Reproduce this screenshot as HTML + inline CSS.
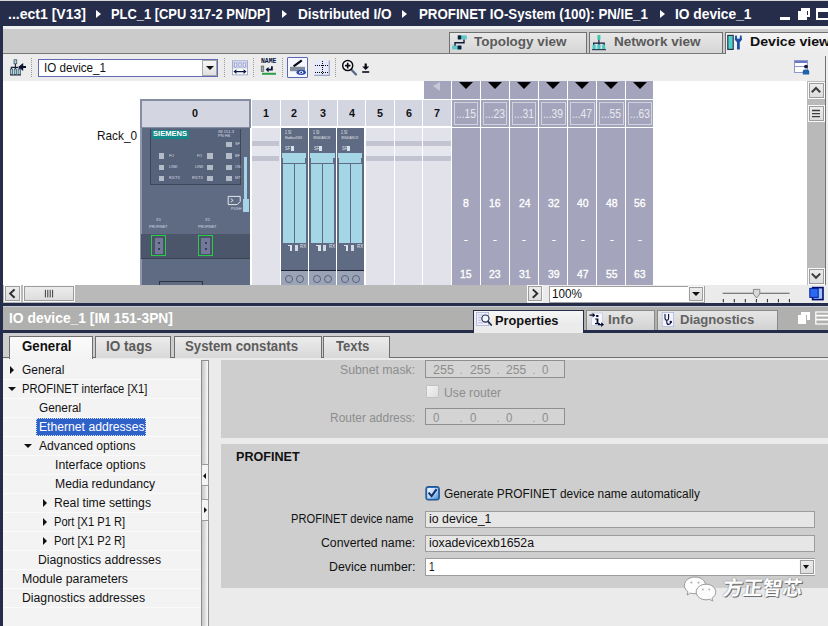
<!DOCTYPE html>
<html lang="en">
<head>
<meta charset="utf-8">
<title>IO device_1 - Device view</title>
<style>
*{box-sizing:border-box;margin:0;padding:0}
html,body{width:828px;height:626px;overflow:hidden;background:#ebebeb}
body{position:relative;font-family:"Liberation Sans","Noto Sans CJK SC",sans-serif;font-size:12px;color:#111}
.a{position:absolute}
.t{position:absolute;white-space:nowrap;line-height:1;transform-origin:0 50%}
svg{position:absolute;overflow:visible}
i.ar{position:absolute;top:10px;width:0;height:0;border-left:5.4px solid #fff;border-top:4.8px solid transparent;border-bottom:4.8px solid transparent}
.vtab{position:absolute;top:32px;height:21px;border:1px solid #707070;border-bottom:none;background:linear-gradient(#e8e8e8,#d5d5d5)}
.sep{position:absolute;top:58px;width:0;height:19px;border-left:1px dotted #9a9a9a}
.sbtn{position:absolute;background:linear-gradient(#f6f6f6,#e0e0e0);border:1px solid #a8a8a8}
.inp{position:absolute;border:1px solid #9c9c9c;background:#e6e6e6}
</style>
</head>
<body>
<!-- TITLE BAR -->
<div class="a" style="left:0px;top:0px;width:828px;height:25.6px;background:#262d4a;"></div>
<div class="a" style="left:0px;top:0px;width:828px;height:1px;background:#d8d8d8;"></div>
<span class="t" style="left:8px;top:7.6px;font-size:13.8px;font-weight:bold;color:#fff;transform:scaleX(1.017);">...ect1 [V13]</span>
<i class="ar" style="left:96px"></i>
<span class="t" style="left:111px;top:7.6px;font-size:13.8px;font-weight:bold;color:#fff;transform:scaleX(0.934);">PLC_1 [CPU 317-2 PN/DP]</span>
<i class="ar" style="left:282px"></i>
<span class="t" style="left:297.5px;top:7.6px;font-size:13.8px;font-weight:bold;color:#fff;transform:scaleX(0.984);">Distributed I/O</span>
<i class="ar" style="left:402px"></i>
<span class="t" style="left:419px;top:7.6px;font-size:13.8px;font-weight:bold;color:#fff;transform:scaleX(0.963);">PROFINET IO-System (100): PN/IE_1</span>
<i class="ar" style="left:660px"></i>
<span class="t" style="left:675px;top:7.6px;font-size:13.8px;font-weight:bold;color:#fff;transform:scaleX(0.997);">IO device_1</span>
<div class="a" style="left:780px;top:17px;width:10px;height:3px;background:#fff;"></div>
<div class="a" style="left:801px;top:8px;width:9px;height:9px;border:2px solid #fff;border-top-width:3px"></div>
<div class="a" style="left:798px;top:11px;width:9px;height:9px;background:#fff;"></div>
<div class="a" style="left:816px;top:8px;width:14px;height:12px;border:2px solid #fff;border-top-width:4px"></div>
<div class="a" style="left:0px;top:26px;width:3px;height:280px;background:#262d4a;"></div>
<!-- VIEW TABS -->
<div class="a" style="left:3px;top:25.6px;width:825px;height:3.4px;background:#f0f0f0;"></div>
<div class="a" style="left:3px;top:29px;width:825px;height:24px;background:#cbcbcb;"></div>
<div class="a" style="left:3px;top:53px;width:825px;height:1px;background:#777;"></div>
<div class="vtab" style="left:449px;width:138px"></div>
<div class="vtab" style="left:589px;width:134px"></div>
<div class="vtab" style="left:724.6px;width:110px;height:22px;background:linear-gradient(#f4f4f4,#ececec)"></div>
<span class="t" style="left:474px;top:35.2px;font-size:13.6px;font-weight:bold;color:#5a5a5a;transform:scaleX(0.990);">Topology view</span>
<span class="t" style="left:614px;top:35.2px;font-size:13.6px;font-weight:bold;color:#5a5a5a;transform:scaleX(0.996);">Network view</span>
<span class="t" style="left:750px;top:35.2px;font-size:13.6px;font-weight:bold;color:#111;transform:scaleX(1.038);">Device view</span>
<!-- TOOLBAR -->
<div class="a" style="left:3px;top:54px;width:825px;height:27px;background:#ececec;"></div>
<div class="sep" style="left:31px"></div>
<div class="a" style="left:38px;top:59px;width:180px;height:18px;border:1px solid #5f69b4;background:#fff"></div>
<span class="t" style="left:43.5px;top:62.25px;font-size:12.5px;color:#111;transform:scaleX(0.929);">IO device_1</span>
<div class="sbtn" style="left:202px;top:60px;width:15px;height:16px"></div>
<div class="a" style="left:206px;top:66px;width:0;height:0;border-top:4px solid #111;border-left:4px solid transparent;border-right:4px solid transparent"></div>
<div class="sep" style="left:224px"></div>
<div class="sep" style="left:253px"></div>
<div class="sep" style="left:282px"></div>
<div class="sep" style="left:335px"></div>
<svg style="left:9px;top:58px" width="18" height="18" viewBox="9 58 18 18">
<rect x="14" y="59.8" width="2.8" height="4" fill="#a8d0d8" stroke="#2a4a5a" stroke-width=".7"/>
<path d="M15.4 64v3.4M10.8 67.4h7.4M11.4 67.4v2M15.4 67.4v2M19.3 67.4v2" stroke="#16203a" stroke-width="1.1" fill="none"/>
<rect x="10.3" y="69" width="2.3" height="5.4" fill="#a8d0d8" stroke="#2a4a5a" stroke-width=".7"/>
<rect x="14.2" y="69" width="2.3" height="5.4" fill="#a8d0d8" stroke="#2a4a5a" stroke-width=".7"/>
<rect x="18.1" y="69" width="2.3" height="5.4" fill="#a8d0d8" stroke="#2a4a5a" stroke-width=".7"/>
<path d="M10 75h11" stroke="#16203a" stroke-width="1"/>
<path d="M18.2 67l5-4v3h2.8v2h-2.8v3z" fill="#0a1030"/>
</svg>
<svg style="left:232px;top:60px" width="16" height="16" viewBox="232 60 16 16">
<rect x="232.5" y="60.8" width="15" height="14" fill="#fff" stroke="#a4acd4" stroke-width="1"/>
<rect x="233" y="61.3" width="14" height="7.2" fill="#cdd2ec"/>
<rect x="234.6" y="63" width="2.2" height="4" fill="#e8ecfa" stroke="#8a94c0" stroke-width=".6"/>
<rect x="238.9" y="63" width="2.2" height="4" fill="#e8ecfa" stroke="#8a94c0" stroke-width=".6"/>
<rect x="243.2" y="63" width="2.2" height="4" fill="#e8ecfa" stroke="#8a94c0" stroke-width=".6"/>
<path d="M233.4 71.6l3-2.4v1.7h7.2v-1.7l3 2.4l-3 2.4v-1.7h-7.2v1.7z" fill="#10183c"/>
</svg>
<span class="t" style="left:261.2px;top:59.35px;font-size:6.5px;font-weight:bold;color:#0c1440;transform:scaleX(0.993);font-family:'Liberation Mono',monospace;">NAME</span>
<svg style="left:260px;top:65px" width="18" height="11" viewBox="260 65 18 11">
<rect x="261.2" y="66" width="2.6" height="5.6" fill="#9aa8a0" stroke="#4a5a58" stroke-width=".6"/>
<path d="M265.6 69.6l3-2.6v1.8h2.4v-2.6h1.8v4.4h-4.2v1.8z" fill="#0c1440"/>
<rect x="262" y="72.8" width="14" height="2" fill="#2ea04a"/>
</svg>
<div class="a" style="left:287px;top:57px;width:21px;height:21px;border:1.5px solid #5c66b6;background:#f6f8ff;border-radius:1px"></div>
<svg style="left:288px;top:58px" width="20" height="20" viewBox="288 58 20 20">
<path d="M293.6 66.4L301.8 60.4" stroke="#0a0a14" stroke-width="2.2"/>
<rect x="290" y="66.8" width="15" height="4.4" fill="#848c98"/>
<ellipse cx="301.2" cy="72.3" rx="4.7" ry="2.6" fill="#2848b4"/>
<ellipse cx="301.2" cy="72.3" rx="2" ry="1.5" fill="#fff"/>
<circle cx="301.2" cy="72.3" r=".9" fill="#16204a"/>
</svg>
<svg style="left:314px;top:60px" width="16" height="16" viewBox="314 60 16 16">
<rect x="314.3" y="60.4" width="15" height="15" fill="#e6e9f9"/>
<path d="M329.3 60.4v15h-15" stroke="#9aa2c4" stroke-width="1.2" fill="none"/>
<path d="M315 65.5h14M315 72.5h14M322.5 61v14" stroke="#0a0a14" stroke-width="1" stroke-dasharray="1 1" fill="none" shape-rendering="crispEdges"/>
</svg>
<svg style="left:340px;top:58px" width="32" height="20" viewBox="340 58 32 20">
<path d="M351.2 69.5L356 74.5" stroke="#5a6a8a" stroke-width="2.4" stroke-linecap="round"/>
<circle cx="347.7" cy="65.6" r="5" fill="#fff" stroke="#0a0a14" stroke-width="1.5"/>
<path d="M344.9 65.6h5.6M347.7 62.8v5.6" stroke="#0a0a14" stroke-width="1.7"/>
<path d="M364.6 63.6h2.2v2.8h2.4l-3.5 3.6l-3.5-3.6h2.4z" fill="#0a0a14"/>
<rect x="362.2" y="71.2" width="7" height="1.6" fill="#0a0a14"/>
</svg>
<svg style="left:794px;top:59px" width="17" height="17" viewBox="794 59 17 17">
<rect x="794.5" y="60.5" width="13" height="12" fill="#fff" stroke="#8e98cc" stroke-width="1"/>
<rect x="795" y="61" width="12" height="2" fill="#6a78c8"/>
<path d="M795 66.5h12" stroke="#8e98cc" stroke-width="1"/>
<circle cx="806" cy="66.6" r="1.9" fill="#10183c"/>
<path d="M802.8 74.6v-3.2q0-2 2-2h2.4q2 0 2 2v3.2z" fill="#1f62a8"/>
</svg>
<svg style="left:450px;top:33px" width="20" height="19" viewBox="450 33 20 19">
<rect x="457.8" y="35.4" width="9" height="4" fill="#5cc8c8"/><rect x="457.8" y="35.4" width="3.4" height="4" fill="#101c3c"/>
<rect x="452" y="45.6" width="9.4" height="3.8" fill="#5cc8c8"/><rect x="457.6" y="45.6" width="3.8" height="3.8" fill="#101c3c"/>
<path d="M464 39.4v3.4h-9v3" fill="none" stroke="#101c3c" stroke-width="1.4"/>
</svg>
<svg style="left:590px;top:33px" width="20" height="19" viewBox="590 33 20 19">
<rect x="597.4" y="35" width="3" height="4.8" fill="#3ec8b0"/>
<path d="M598.9 39.8v3.4M593.6 45v-1.8h10.6v1.8M598.9 43.2v1.8" fill="none" stroke="#101c3c" stroke-width="1.2"/>
<rect x="592.6" y="44.6" width="3" height="4.6" fill="#3ec8c0"/><rect x="597.4" y="44.6" width="3" height="4.6" fill="#3ec8c0"/><rect x="602.2" y="44.6" width="3" height="4.6" fill="#3ec8c0"/>
<path d="M592 49.7h14" stroke="#101c3c" stroke-width="1"/>
</svg>
<svg style="left:726px;top:33px" width="20" height="19" viewBox="726 33 20 19">
<rect x="727.8" y="35.4" width="5.4" height="14" fill="#4ed0d0" stroke="#2a3446" stroke-width="1.2"/>
<path d="M735.2 35.4l1.6 0l.4 3.4l2.4 0l.4-3.4l1.6 0l.4 4.4l-2.2 2.4v7.4h-2.8v-7.4l-2.2-2.4z" fill="#1f4fa4"/>
</svg>
<!-- CANVAS / RACK -->
<div class="a" style="left:3px;top:81px;width:804px;height:204px;background:#fff;"></div>
<span class="t" style="left:97px;top:129.9px;font-size:12.2px;color:#111;transform:scaleX(0.968);">Rack_0</span>
<div class="a" style="left:140.2px;top:99.3px;width:110.6px;height:28.3px;background:#848da2;"></div>
<div class="a" style="left:141.8px;top:100.9px;width:107.4px;height:25.9px;background:#d3d5e1;"></div>
<span class="t" style="left:192.3px;top:107.6px;font-size:11.2px;font-weight:bold;color:#111;transform:scaleX(0.962);">0</span>
<div class="a" style="left:252px;top:100.3px;width:27.6px;height:26.2px;background:#d3d5e1;"></div>
<span class="t" style="left:262.9px;top:107.6px;font-size:11.2px;font-weight:bold;color:#111;transform:scaleX(0.962);">1</span>
<div class="a" style="left:280.58px;top:100.3px;width:27.6px;height:26.2px;background:#d3d5e1;"></div>
<span class="t" style="left:291.48px;top:107.6px;font-size:11.2px;font-weight:bold;color:#111;transform:scaleX(0.962);">2</span>
<div class="a" style="left:309.16px;top:100.3px;width:27.6px;height:26.2px;background:#d3d5e1;"></div>
<span class="t" style="left:320.06px;top:107.6px;font-size:11.2px;font-weight:bold;color:#111;transform:scaleX(0.962);">3</span>
<div class="a" style="left:337.74px;top:100.3px;width:27.6px;height:26.2px;background:#d3d5e1;"></div>
<span class="t" style="left:348.64px;top:107.6px;font-size:11.2px;font-weight:bold;color:#111;transform:scaleX(0.962);">4</span>
<div class="a" style="left:366.32px;top:100.3px;width:27.6px;height:26.2px;background:#d3d5e1;"></div>
<span class="t" style="left:377.22px;top:107.6px;font-size:11.2px;font-weight:bold;color:#111;transform:scaleX(0.962);">5</span>
<div class="a" style="left:394.9px;top:100.3px;width:27.6px;height:26.2px;background:#d3d5e1;"></div>
<span class="t" style="left:405.8px;top:107.6px;font-size:11.2px;font-weight:bold;color:#111;transform:scaleX(0.962);">6</span>
<div class="a" style="left:423.48px;top:100.3px;width:27.6px;height:26.2px;background:#d3d5e1;"></div>
<span class="t" style="left:434.38px;top:107.6px;font-size:11.2px;font-weight:bold;color:#111;transform:scaleX(0.962);">7</span>
<div class="a" style="left:252px;top:127.8px;width:27.6px;height:157.2px;background:#e1e2ea;"></div>
<div class="a" style="left:252px;top:141px;width:27.4px;height:4.8px;background:#c3c4d2;"></div>
<div class="a" style="left:252px;top:145.8px;width:27.4px;height:10px;background:#e6e7ee;"></div>
<div class="a" style="left:252px;top:155.8px;width:27.4px;height:5px;background:#c3c4d2;"></div>
<div class="a" style="left:366.32px;top:127.8px;width:27.6px;height:157.2px;background:#e1e2ea;"></div>
<div class="a" style="left:366.32px;top:141px;width:27.4px;height:4.8px;background:#c3c4d2;"></div>
<div class="a" style="left:366.32px;top:145.8px;width:27.4px;height:10px;background:#e6e7ee;"></div>
<div class="a" style="left:366.32px;top:155.8px;width:27.4px;height:5px;background:#c3c4d2;"></div>
<div class="a" style="left:394.9px;top:127.8px;width:27.6px;height:157.2px;background:#e1e2ea;"></div>
<div class="a" style="left:394.9px;top:141px;width:27.4px;height:4.8px;background:#c3c4d2;"></div>
<div class="a" style="left:394.9px;top:145.8px;width:27.4px;height:10px;background:#e6e7ee;"></div>
<div class="a" style="left:394.9px;top:155.8px;width:27.4px;height:5px;background:#c3c4d2;"></div>
<div class="a" style="left:423.48px;top:127.8px;width:27.6px;height:157.2px;background:#e1e2ea;"></div>
<div class="a" style="left:423.48px;top:141px;width:27.4px;height:4.8px;background:#c3c4d2;"></div>
<div class="a" style="left:423.48px;top:145.8px;width:27.4px;height:10px;background:#e6e7ee;"></div>
<div class="a" style="left:423.48px;top:155.8px;width:27.4px;height:5px;background:#c3c4d2;"></div>
<div class="a" style="left:423.5px;top:80.7px;width:27.2px;height:18px;background:#a4a5bc;"></div>
<div class="a" style="left:432.6px;top:82px;width:0;height:0;border-right:7.4px solid #c6c8d8;border-top:4.6px solid transparent;border-bottom:5.8px solid transparent"></div>
<div class="a" style="left:452px;top:80.7px;width:27.8px;height:18px;background:#a4a5bc;"></div>
<div class="a" style="left:458.6px;top:82px;width:0;height:0;border-top:7.2px solid #000;border-left:7.3px solid transparent;border-right:7.3px solid transparent"></div>
<div class="a" style="left:452px;top:100.3px;width:27.8px;height:26.4px;background:#a4a5bc;"></div>
<div class="a" style="left:453.5px;top:102px;width:24.8px;height:23.2px;border:1px solid #d0d2de"></div>
<span class="t" style="left:456px;top:107.5px;font-size:12px;color:#e8e9f0;transform:scaleX(0.856);">...15</span>
<div class="a" style="left:452px;top:127.8px;width:27.8px;height:157.2px;background:#a4a5bc;"></div>
<span class="t" style="left:463.3px;top:197.4px;font-size:11.6px;color:#fff;transform:scaleX(0.899);-webkit-text-stroke:.35px #fff;">8</span>
<span class="t" style="left:464.3px;top:233.1px;font-size:11.6px;color:#fff;transform:scaleX(0.981);-webkit-text-stroke:.35px #fff;">-</span>
<span class="t" style="left:460.4px;top:268.3px;font-size:11.6px;color:#fff;transform:scaleX(0.899);-webkit-text-stroke:.35px #fff;">15</span>
<div class="a" style="left:481.07px;top:80.7px;width:27.8px;height:18px;background:#a4a5bc;"></div>
<div class="a" style="left:487.67px;top:82px;width:0;height:0;border-top:7.2px solid #000;border-left:7.3px solid transparent;border-right:7.3px solid transparent"></div>
<div class="a" style="left:481.07px;top:100.3px;width:27.8px;height:26.4px;background:#a4a5bc;"></div>
<div class="a" style="left:482.57px;top:102px;width:24.8px;height:23.2px;border:1px solid #d0d2de"></div>
<span class="t" style="left:485.07px;top:107.5px;font-size:12px;color:#e8e9f0;transform:scaleX(0.856);">...23</span>
<div class="a" style="left:481.07px;top:127.8px;width:27.8px;height:157.2px;background:#a4a5bc;"></div>
<span class="t" style="left:489.47px;top:197.4px;font-size:11.6px;color:#fff;transform:scaleX(0.899);-webkit-text-stroke:.35px #fff;">16</span>
<span class="t" style="left:493.37px;top:233.1px;font-size:11.6px;color:#fff;transform:scaleX(0.981);-webkit-text-stroke:.35px #fff;">-</span>
<span class="t" style="left:489.47px;top:268.3px;font-size:11.6px;color:#fff;transform:scaleX(0.899);-webkit-text-stroke:.35px #fff;">23</span>
<div class="a" style="left:510.14px;top:80.7px;width:27.8px;height:18px;background:#a4a5bc;"></div>
<div class="a" style="left:516.74px;top:82px;width:0;height:0;border-top:7.2px solid #000;border-left:7.3px solid transparent;border-right:7.3px solid transparent"></div>
<div class="a" style="left:510.14px;top:100.3px;width:27.8px;height:26.4px;background:#a4a5bc;"></div>
<div class="a" style="left:511.64px;top:102px;width:24.8px;height:23.2px;border:1px solid #d0d2de"></div>
<span class="t" style="left:514.14px;top:107.5px;font-size:12px;color:#e8e9f0;transform:scaleX(0.856);">...31</span>
<div class="a" style="left:510.14px;top:127.8px;width:27.8px;height:157.2px;background:#a4a5bc;"></div>
<span class="t" style="left:518.54px;top:197.4px;font-size:11.6px;color:#fff;transform:scaleX(0.899);-webkit-text-stroke:.35px #fff;">24</span>
<span class="t" style="left:522.44px;top:233.1px;font-size:11.6px;color:#fff;transform:scaleX(0.981);-webkit-text-stroke:.35px #fff;">-</span>
<span class="t" style="left:518.54px;top:268.3px;font-size:11.6px;color:#fff;transform:scaleX(0.899);-webkit-text-stroke:.35px #fff;">31</span>
<div class="a" style="left:539.21px;top:80.7px;width:27.8px;height:18px;background:#a4a5bc;"></div>
<div class="a" style="left:545.81px;top:82px;width:0;height:0;border-top:7.2px solid #000;border-left:7.3px solid transparent;border-right:7.3px solid transparent"></div>
<div class="a" style="left:539.21px;top:100.3px;width:27.8px;height:26.4px;background:#a4a5bc;"></div>
<div class="a" style="left:540.71px;top:102px;width:24.8px;height:23.2px;border:1px solid #d0d2de"></div>
<span class="t" style="left:543.21px;top:107.5px;font-size:12px;color:#e8e9f0;transform:scaleX(0.856);">...39</span>
<div class="a" style="left:539.21px;top:127.8px;width:27.8px;height:157.2px;background:#a4a5bc;"></div>
<span class="t" style="left:547.61px;top:197.4px;font-size:11.6px;color:#fff;transform:scaleX(0.899);-webkit-text-stroke:.35px #fff;">32</span>
<span class="t" style="left:551.51px;top:233.1px;font-size:11.6px;color:#fff;transform:scaleX(0.981);-webkit-text-stroke:.35px #fff;">-</span>
<span class="t" style="left:547.61px;top:268.3px;font-size:11.6px;color:#fff;transform:scaleX(0.899);-webkit-text-stroke:.35px #fff;">39</span>
<div class="a" style="left:568.28px;top:80.7px;width:27.8px;height:18px;background:#a4a5bc;"></div>
<div class="a" style="left:574.88px;top:82px;width:0;height:0;border-top:7.2px solid #000;border-left:7.3px solid transparent;border-right:7.3px solid transparent"></div>
<div class="a" style="left:568.28px;top:100.3px;width:27.8px;height:26.4px;background:#a4a5bc;"></div>
<div class="a" style="left:569.78px;top:102px;width:24.8px;height:23.2px;border:1px solid #d0d2de"></div>
<span class="t" style="left:572.28px;top:107.5px;font-size:12px;color:#e8e9f0;transform:scaleX(0.856);">...47</span>
<div class="a" style="left:568.28px;top:127.8px;width:27.8px;height:157.2px;background:#a4a5bc;"></div>
<span class="t" style="left:576.68px;top:197.4px;font-size:11.6px;color:#fff;transform:scaleX(0.899);-webkit-text-stroke:.35px #fff;">40</span>
<span class="t" style="left:580.58px;top:233.1px;font-size:11.6px;color:#fff;transform:scaleX(0.981);-webkit-text-stroke:.35px #fff;">-</span>
<span class="t" style="left:576.68px;top:268.3px;font-size:11.6px;color:#fff;transform:scaleX(0.899);-webkit-text-stroke:.35px #fff;">47</span>
<div class="a" style="left:597.35px;top:80.7px;width:27.8px;height:18px;background:#a4a5bc;"></div>
<div class="a" style="left:603.95px;top:82px;width:0;height:0;border-top:7.2px solid #000;border-left:7.3px solid transparent;border-right:7.3px solid transparent"></div>
<div class="a" style="left:597.35px;top:100.3px;width:27.8px;height:26.4px;background:#a4a5bc;"></div>
<div class="a" style="left:598.85px;top:102px;width:24.8px;height:23.2px;border:1px solid #d0d2de"></div>
<span class="t" style="left:601.35px;top:107.5px;font-size:12px;color:#e8e9f0;transform:scaleX(0.856);">...55</span>
<div class="a" style="left:597.35px;top:127.8px;width:27.8px;height:157.2px;background:#a4a5bc;"></div>
<span class="t" style="left:605.75px;top:197.4px;font-size:11.6px;color:#fff;transform:scaleX(0.899);-webkit-text-stroke:.35px #fff;">48</span>
<span class="t" style="left:609.65px;top:233.1px;font-size:11.6px;color:#fff;transform:scaleX(0.981);-webkit-text-stroke:.35px #fff;">-</span>
<span class="t" style="left:605.75px;top:268.3px;font-size:11.6px;color:#fff;transform:scaleX(0.899);-webkit-text-stroke:.35px #fff;">55</span>
<div class="a" style="left:626.42px;top:80.7px;width:26.8px;height:18px;background:#a4a5bc;"></div>
<div class="a" style="left:632.52px;top:82px;width:0;height:0;border-top:7.2px solid #000;border-left:7.3px solid transparent;border-right:7.3px solid transparent"></div>
<div class="a" style="left:626.42px;top:100.3px;width:26.8px;height:26.4px;background:#a4a5bc;"></div>
<div class="a" style="left:627.92px;top:102px;width:23.8px;height:23.2px;border:1px solid #d0d2de"></div>
<span class="t" style="left:630.42px;top:107.5px;font-size:12px;color:#e8e9f0;transform:scaleX(0.856);">...63</span>
<div class="a" style="left:626.42px;top:127.8px;width:26.8px;height:157.2px;background:#a4a5bc;"></div>
<span class="t" style="left:634.32px;top:197.4px;font-size:11.6px;color:#fff;transform:scaleX(0.899);-webkit-text-stroke:.35px #fff;">56</span>
<span class="t" style="left:638.22px;top:233.1px;font-size:11.6px;color:#fff;transform:scaleX(0.981);-webkit-text-stroke:.35px #fff;">-</span>
<span class="t" style="left:634.32px;top:268.3px;font-size:11.6px;color:#fff;transform:scaleX(0.899);-webkit-text-stroke:.35px #fff;">63</span>
<div class="a" style="left:141px;top:127.6px;width:108.6px;height:157.4px;background:#5f6b82;"></div>
<div class="a" style="left:140px;top:127.6px;width:1.8px;height:157.4px;background:#8d96aa;"></div>
<div class="a" style="left:150.3px;top:128.5px;width:90.6px;height:56.2px;background:#56627a;border:1px solid #3d475a;border-top:none"></div>
<div class="a" style="left:151.6px;top:129.6px;width:37.6px;height:9.6px;background:#15888a;"></div>
<span class="t" style="left:153.4px;top:131.1px;font-size:6.8px;font-weight:bold;color:#fff;transform:scaleX(1.111);">SIEMENS</span>
<span class="t" style="left:217.7px;top:130px;font-size:4px;color:#d6dbe6;transform:scaleX(1.013);">IM 151-3</span>
<span class="t" style="left:217.7px;top:134.4px;font-size:4px;color:#d6dbe6;transform:scaleX(1.005);">PN HS</span>
<div class="a" style="left:158.5px;top:153px;width:5.6px;height:5.6px;background:#b3bac8;"></div>
<div class="a" style="left:158.5px;top:164.8px;width:5.6px;height:5.6px;background:#b3bac8;"></div>
<div class="a" style="left:158.5px;top:175.8px;width:5.6px;height:5.6px;background:#b3bac8;"></div>
<div class="a" style="left:207.3px;top:153px;width:5.6px;height:5.6px;background:#b3bac8;"></div>
<div class="a" style="left:207.3px;top:164.8px;width:5.6px;height:5.6px;background:#b3bac8;"></div>
<div class="a" style="left:207.3px;top:175.8px;width:5.6px;height:5.6px;background:#b3bac8;"></div>
<div class="a" style="left:226.3px;top:141.6px;width:5.6px;height:5.6px;background:#b3bac8;"></div>
<div class="a" style="left:226.3px;top:153px;width:5.6px;height:5.6px;background:#b3bac8;"></div>
<div class="a" style="left:226.3px;top:164.8px;width:5.6px;height:5.6px;background:#b3bac8;"></div>
<div class="a" style="left:226.3px;top:175.8px;width:5.6px;height:5.6px;background:#b3bac8;"></div>
<span class="t" style="left:169px;top:153.8px;font-size:4.4px;color:#d6dbe6;transform:scaleX(0.818);">FO</span>
<span class="t" style="left:169px;top:165.4px;font-size:4.4px;color:#d6dbe6;transform:scaleX(0.870);">LINK</span>
<span class="t" style="left:169px;top:176.4px;font-size:4.4px;color:#d6dbe6;transform:scaleX(0.850);">RX/TX</span>
<span class="t" style="left:196.5px;top:153.8px;font-size:4.4px;color:#d6dbe6;transform:scaleX(0.818);">FO</span>
<span class="t" style="left:194.5px;top:165.4px;font-size:4.4px;color:#d6dbe6;transform:scaleX(0.870);">LINK</span>
<span class="t" style="left:192px;top:176.4px;font-size:4.4px;color:#d6dbe6;transform:scaleX(0.850);">RX/TX</span>
<span class="t" style="left:234.5px;top:142.2px;font-size:4.4px;color:#d6dbe6;transform:scaleX(0.889);">SF</span>
<span class="t" style="left:234.5px;top:153.8px;font-size:4.4px;color:#d6dbe6;transform:scaleX(0.889);">BF</span>
<span class="t" style="left:234.5px;top:165.4px;font-size:4.4px;color:#d6dbe6;transform:scaleX(0.834);">ON</span>
<span class="t" style="left:234.5px;top:176.4px;font-size:4.4px;color:#d6dbe6;transform:scaleX(0.867);">MT</span>
<div class="a" style="left:244px;top:156.6px;width:2.7px;height:42.4px;background:#a6d3e6;"></div>
<div class="a" style="left:242.6px;top:198.6px;width:6.2px;height:13.2px;background:#a6d3e6;"></div>
<svg style="left:227px;top:195px" width="15" height="11" viewBox="227 195 15 11">
<path d="M228.2 196.4h12v5.2l-3 3h-9z" fill="none" stroke="#e4e8f0" stroke-width="1"/>
<path d="M230.6 198.6l2.6 1.8l-2.6 1.8" fill="none" stroke="#e4e8f0" stroke-width=".9"/>
</svg>
<span class="t" style="left:230.6px;top:206.7px;font-size:4.2px;color:#d6dbe6;transform:scaleX(0.893);">PUSH</span>
<span class="t" style="left:155.6px;top:217.5px;font-size:4.2px;color:#d6dbe6;transform:scaleX(0.976);">X1</span>
<span class="t" style="left:148.8px;top:224.7px;font-size:4.2px;color:#d6dbe6;transform:scaleX(0.879);">PROFINET</span>
<span class="t" style="left:204.6px;top:217.5px;font-size:4.2px;color:#d6dbe6;transform:scaleX(0.976);">X1</span>
<span class="t" style="left:197.8px;top:224.7px;font-size:4.2px;color:#d6dbe6;transform:scaleX(0.879);">PROFINET</span>
<div class="a" style="left:141px;top:234px;width:108.5px;height:24px;background:#4b566b;"></div>
<div class="a" style="left:141px;top:258px;width:108.5px;height:1.2px;background:#39424f;"></div>
<div class="a" style="left:151.1px;top:235px;width:15.4px;height:21.4px;border:1.9px solid #27cc48;background:#4a5366"></div>
<div class="a" style="left:154.5px;top:237.6px;width:8.6px;height:16.6px;background:#74799a;"></div>
<div class="a" style="left:157.8px;top:241.6px;width:2px;height:2.4px;background:#39405a;"></div>
<div class="a" style="left:157.8px;top:247.8px;width:2px;height:2.4px;background:#39405a;"></div>
<div class="a" style="left:198px;top:235px;width:15.4px;height:21.4px;border:1.9px solid #27cc48;background:#4a5366"></div>
<div class="a" style="left:201.4px;top:237.6px;width:8.6px;height:16.6px;background:#74799a;"></div>
<div class="a" style="left:204.7px;top:241.6px;width:2px;height:2.4px;background:#39405a;"></div>
<div class="a" style="left:204.7px;top:247.8px;width:2px;height:2.4px;background:#39405a;"></div>
<div class="a" style="left:158.5px;top:281.4px;width:44.4px;height:5px;border:1px solid #2c3444;border-bottom:none"></div>
<div class="a" style="left:281.1px;top:127.8px;width:26.7px;height:142.2px;background:#5f6b82;"></div>
<span class="t" style="left:284.5px;top:130.5px;font-size:4.6px;color:#e2e6ee;transform:scaleX(0.771);">1 SI</span>
<span class="t" style="left:284.5px;top:137.3px;font-size:3.8px;color:#e2e6ee;transform:scaleX(0.769);">Modbus/USS</span>
<span class="t" style="left:285.3px;top:146.6px;font-size:4.8px;color:#e2e6ee;transform:scaleX(0.831);">SF</span>
<div class="a" style="left:291px;top:146.1px;width:3px;height:5.3px;background:#d3e3f0;"></div>
<div class="a" style="left:282.1px;top:153px;width:24.2px;height:5px;background:#a5d6e6;"></div>
<div class="a" style="left:283px;top:158px;width:22.2px;height:4.9px;background:#a5d6e6;"></div>
<div class="a" style="left:283px;top:163.8px;width:11px;height:79px;background:#a5d6e6;"></div>
<div class="a" style="left:295.1px;top:163.8px;width:11px;height:79px;background:#a5d6e6;"></div>
<div class="a" style="left:287.6px;top:245px;width:4.6px;height:1.3px;background:#dde3ec;"></div>
<div class="a" style="left:289.7px;top:245px;width:2.5px;height:5.5px;background:#dde3ec;"></div>
<div class="a" style="left:294.8px;top:245px;width:3.3px;height:5.5px;background:#d3d9e4;"></div>
<span class="t" style="left:300.3px;top:245.1px;font-size:4.6px;color:#e2e6ee;transform:scaleX(0.970);">RX</span>
<div class="a" style="left:281.1px;top:269.7px;width:26.7px;height:1.4px;background:#1a2030;"></div>
<div class="a" style="left:281.1px;top:271.1px;width:26.7px;height:13.9px;background:#9ba4b7;"></div>
<div class="a" style="left:284.8px;top:274.8px;width:7.8px;height:7.8px;border:1px solid #56617a;border-radius:50%"></div>
<div class="a" style="left:296.1px;top:274.8px;width:7.8px;height:7.8px;border:1px solid #56617a;border-radius:50%"></div>
<div class="a" style="left:309.4px;top:127.8px;width:26.7px;height:142.2px;background:#5f6b82;"></div>
<span class="t" style="left:312.8px;top:130.5px;font-size:4.6px;color:#e2e6ee;transform:scaleX(0.771);">1 SI</span>
<span class="t" style="left:312.8px;top:137.3px;font-size:3.8px;color:#e2e6ee;transform:scaleX(0.886);">3964/ASCII</span>
<span class="t" style="left:313.6px;top:146.6px;font-size:4.8px;color:#e2e6ee;transform:scaleX(0.831);">SF</span>
<div class="a" style="left:319.3px;top:146.1px;width:3px;height:5.3px;background:#d3e3f0;"></div>
<div class="a" style="left:310.4px;top:153px;width:24.2px;height:5px;background:#a5d6e6;"></div>
<div class="a" style="left:311.3px;top:158px;width:22.2px;height:4.9px;background:#a5d6e6;"></div>
<div class="a" style="left:311.3px;top:163.8px;width:11px;height:79px;background:#a5d6e6;"></div>
<div class="a" style="left:323.4px;top:163.8px;width:11px;height:79px;background:#a5d6e6;"></div>
<div class="a" style="left:315.9px;top:245px;width:4.6px;height:1.3px;background:#dde3ec;"></div>
<div class="a" style="left:318px;top:245px;width:2.5px;height:5.5px;background:#dde3ec;"></div>
<div class="a" style="left:323.1px;top:245px;width:3.3px;height:5.5px;background:#d3d9e4;"></div>
<span class="t" style="left:328.6px;top:245.1px;font-size:4.6px;color:#e2e6ee;transform:scaleX(0.970);">RX</span>
<div class="a" style="left:309.4px;top:269.7px;width:26.7px;height:1.4px;background:#1a2030;"></div>
<div class="a" style="left:309.4px;top:271.1px;width:26.7px;height:13.9px;background:#9ba4b7;"></div>
<div class="a" style="left:313.1px;top:274.8px;width:7.8px;height:7.8px;border:1px solid #56617a;border-radius:50%"></div>
<div class="a" style="left:324.4px;top:274.8px;width:7.8px;height:7.8px;border:1px solid #56617a;border-radius:50%"></div>
<div class="a" style="left:337.3px;top:127.8px;width:26.7px;height:142.2px;background:#5f6b82;"></div>
<span class="t" style="left:340.7px;top:130.5px;font-size:4.6px;color:#e2e6ee;transform:scaleX(0.771);">1 SI</span>
<span class="t" style="left:340.7px;top:137.3px;font-size:3.8px;color:#e2e6ee;transform:scaleX(0.886);">3964/ASCII</span>
<span class="t" style="left:341.5px;top:146.6px;font-size:4.8px;color:#e2e6ee;transform:scaleX(0.831);">SF</span>
<div class="a" style="left:347.2px;top:146.1px;width:3px;height:5.3px;background:#d3e3f0;"></div>
<div class="a" style="left:338.3px;top:153px;width:24.2px;height:5px;background:#a5d6e6;"></div>
<div class="a" style="left:339.2px;top:158px;width:22.2px;height:4.9px;background:#a5d6e6;"></div>
<div class="a" style="left:339.2px;top:163.8px;width:11px;height:79px;background:#a5d6e6;"></div>
<div class="a" style="left:351.3px;top:163.8px;width:11px;height:79px;background:#a5d6e6;"></div>
<div class="a" style="left:343.8px;top:245px;width:4.6px;height:1.3px;background:#dde3ec;"></div>
<div class="a" style="left:345.9px;top:245px;width:2.5px;height:5.5px;background:#dde3ec;"></div>
<div class="a" style="left:351px;top:245px;width:3.3px;height:5.5px;background:#d3d9e4;"></div>
<span class="t" style="left:356.5px;top:245.1px;font-size:4.6px;color:#e2e6ee;transform:scaleX(0.970);">RX</span>
<div class="a" style="left:337.3px;top:269.7px;width:26.7px;height:1.4px;background:#1a2030;"></div>
<div class="a" style="left:337.3px;top:271.1px;width:26.7px;height:13.9px;background:#9ba4b7;"></div>
<div class="a" style="left:341px;top:274.8px;width:7.8px;height:7.8px;border:1px solid #56617a;border-radius:50%"></div>
<div class="a" style="left:352.3px;top:274.8px;width:7.8px;height:7.8px;border:1px solid #56617a;border-radius:50%"></div>
<div class="a" style="left:807px;top:81px;width:18px;height:204px;background:#b9b9b9;"></div>
<div class="a" style="left:825px;top:56.4px;width:1px;height:229px;background:#747474;"></div>
<div class="a" style="left:826px;top:54px;width:2px;height:231px;background:#efefef;"></div>
<div class="a" style="left:807.5px;top:81.5px;width:17px;height:17px;background:#fafafa"></div><div class="a" style="left:808.5px;top:82.5px;width:15px;height:15px;background:linear-gradient(#ececec,#dddddd);border:1px solid #9c9c9c"></div>
<div class="a" style="left:807.5px;top:104.5px;width:17px;height:17px;background:#fafafa"></div><div class="a" style="left:808.5px;top:105.5px;width:15px;height:15px;background:linear-gradient(#ececec,#dddddd);border:1px solid #9c9c9c"></div>
<div class="a" style="left:807.5px;top:267.5px;width:17px;height:17px;background:#fafafa"></div><div class="a" style="left:808.5px;top:268.5px;width:15px;height:15px;background:linear-gradient(#ececec,#dddddd);border:1px solid #9c9c9c"></div>
<svg style="left:807px;top:81px" width="18" height="204" viewBox="807 81 18 204">
<path d="M811.8 92.2l4.2-4.2l4.2 4.2" fill="none" stroke="#3c3c3c" stroke-width="2"/>
<path d="M812 110.5h8M812 113.6h8M812 116.7h8" stroke="#3c3c3c" stroke-width="1.3"/>
<path d="M811.8 273.6l4.2 4.2l4.2-4.2" fill="none" stroke="#3c3c3c" stroke-width="2"/>
</svg>
<div class="a" style="left:3px;top:285px;width:825px;height:18px;background:#ebebeb;"></div>
<div class="a" style="left:3px;top:285px;width:524px;height:17.5px;background:#b9b9b9;"></div>
<div class="a" style="left:4px;top:285.3px;width:16.6px;height:16.6px;background:#fafafa"></div><div class="a" style="left:5px;top:286.3px;width:14.6px;height:14.6px;background:linear-gradient(#ececec,#dddddd);border:1px solid #9c9c9c"></div>
<div class="a" style="left:22.6px;top:285.3px;width:52px;height:16.6px;background:#fafafa"></div><div class="a" style="left:23.6px;top:286.3px;width:50px;height:14.6px;background:linear-gradient(#ececec,#dddddd);border:1px solid #9c9c9c"></div>
<div class="a" style="left:526.5px;top:285.3px;width:16.6px;height:16.6px;background:#fafafa"></div><div class="a" style="left:527.5px;top:286.3px;width:14.6px;height:14.6px;background:linear-gradient(#ececec,#dddddd);border:1px solid #9c9c9c"></div>
<svg style="left:3px;top:285px" width="545" height="18" viewBox="3 285 545 18">
<path d="M14.6 289.4l-4.4 4.2l4.4 4.2" fill="none" stroke="#2c2c2c" stroke-width="2"/>
<path d="M45.4 289.8v7.6M47.8 289.8v7.6M50.2 289.8v7.6M52.6 289.8v7.6" stroke="#3c3c3c" stroke-width="1"/>
<path d="M532.8 289.4l4.4 4.2l-4.4 4.2" fill="none" stroke="#2c2c2c" stroke-width="2"/>
</svg>
<div class="a" style="left:549px;top:286px;width:155.5px;height:16.5px;background:#fff;border:1px solid #a0a0a0"></div>
<span class="t" style="left:551.5px;top:287.95px;font-size:12.5px;color:#111;transform:scaleX(0.938);">100%</span>
<div class="a" style="left:688px;top:286.4px;width:16px;height:15.6px;background:#fafafa"></div><div class="a" style="left:689px;top:287.4px;width:14px;height:13.6px;background:linear-gradient(#ececec,#dddddd);border:1px solid #9c9c9c"></div>
<div class="a" style="left:692.4px;top:292.4px;width:0;height:0;border-top:4.2px solid #111;border-left:4px solid transparent;border-right:4px solid transparent"></div>
<svg style="left:720px;top:286px" width="72" height="17" viewBox="720 286 72 17">
<path d="M722.6 293.2h67" stroke="#5a5a5a" stroke-width="1.1"/>
<path d="M723.3 299v3.4M734.3 299v3.4M745.3 299v3.4M756.4 299v3.4M767.4 299v3.4M778.4 299v3.4M789.4 299v3.4" stroke="#222" stroke-width="1"/>
<path d="M753.4 289.4h6.4v4.6l-3.2 4l-3.2-4z" fill="#d8d8d8" stroke="#8a8a8a" stroke-width="1"/>
</svg>
<svg style="left:809px;top:286px" width="16" height="15" viewBox="809 286 16 15">
<rect x="812.6" y="287.6" width="10.4" height="12" fill="#9ec4ff" stroke="#000a6e" stroke-width="1.6"/>
<rect x="809.8" y="288.4" width="8.4" height="9" fill="#2a6af0" stroke="#0a1a9a" stroke-width="1"/>
</svg>
<div class="a" style="left:0px;top:302.6px;width:828px;height:4px;background:#262d4a;"></div>
<!-- INSPECTOR TITLE -->
<div class="a" style="left:0px;top:306px;width:828px;height:24.4px;background:#b0b0ae;"></div>
<div class="a" style="left:0px;top:305.8px;width:828px;height:1px;background:#c8ccd6;"></div>
<div class="a" style="left:0px;top:306px;width:3px;height:320px;background:#262d4a;"></div>
<div class="a" style="left:0px;top:330px;width:828px;height:2.6px;background:#262d4a;"></div>
<span class="t" style="left:8.5px;top:311.7px;font-size:13.8px;font-weight:bold;color:#fff;transform:scaleX(1.004);">IO device_1 [IM 151-3PN]</span>
<div class="a" style="left:473.4px;top:309.6px;width:111px;height:23px;background:linear-gradient(#f6f6f6,#ebebeb 60%);border:1.3px solid #262d4a;border-top-width:1.6px;border-bottom:none"></div>
<div class="a" style="left:586.4px;top:309.8px;width:69px;height:20.4px;background:linear-gradient(#e6e6e6,#d2d2d2);border:1px solid #8a8a8a;border-bottom:none"></div>
<div class="a" style="left:657.4px;top:309.8px;width:120.6px;height:20.4px;background:linear-gradient(#e6e6e6,#d2d2d2);border:1px solid #8a8a8a;border-bottom:none"></div>
<span class="t" style="left:495.3px;top:313.6px;font-size:13.6px;font-weight:bold;color:#111;transform:scaleX(0.943);">Properties</span>
<span class="t" style="left:608.4px;top:313.2px;font-size:13.6px;font-weight:bold;color:#626262;transform:scaleX(1.019);">Info</span>
<span class="t" style="left:679.8px;top:313.2px;font-size:13.6px;font-weight:bold;color:#626262;transform:scaleX(0.963);">Diagnostics</span>
<svg style="left:476px;top:311px" width="17" height="17" viewBox="476 311 17 17">
<rect x="476.6" y="312.4" width="12" height="13" fill="#eef0fc" stroke="#aab0d4" stroke-width=".8"/>
<path d="M478 315h5M478 317.6h3M478 320.2h3M478 322.8h5" stroke="#aab0d4" stroke-width=".8"/>
<circle cx="485.4" cy="318.6" r="3.6" fill="#f4f6ff" stroke="#26304e" stroke-width="1.2"/>
<path d="M488 321.4l3.2 3.6" stroke="#26304e" stroke-width="1.8" stroke-linecap="round"/>
</svg>
<svg style="left:589px;top:311px" width="17" height="17" viewBox="589 311 17 17">
<rect x="591.6" y="313" width="11" height="12.6" fill="#f4f5fd" stroke="#c4c8e0" stroke-width=".8"/>
<path d="M589.4 314.6h3.2v-1.8l2.8 2.4l-2.8 2.4v-1.8h-3.2z" fill="#060a30"/>
<path d="M598 324h3.2v-1.8l2.8 2.4l-2.8 2.4v-1.8h-3.2z" fill="#060a30"/>
<rect x="596.2" y="315" width="2.2" height="2" fill="#060a30"/>
<path d="M595.2 318.4h3.2v4.6h1.4v1.2h-4.8v-1.2h1.6v-3.4h-1.4z" fill="#060a30"/>
</svg>
<svg style="left:661px;top:311px" width="14" height="17" viewBox="661 311 14 17">
<rect x="662.2" y="312.4" width="11.4" height="14" fill="#f2f3fc" stroke="#b4b8d8" stroke-width=".8"/>
<path d="M665 314v4.2q0 2 1.8 2t1.8-2v-4.2M666.8 320.2v2.2q0 2 2 2q1.6 0 1.8-1.6" fill="none" stroke="#0a1040" stroke-width="1.1"/>
<circle cx="670.8" cy="322" r="1.2" fill="#0a1040"/>
</svg>
<div class="a" style="left:801.4px;top:311.6px;width:8.4px;height:8.4px;background:#fff;"></div>
<div class="a" style="left:800.4px;top:314.6px;width:6.4px;height:1px;background:#b0b0ae;"></div>
<div class="a" style="left:806.4px;top:314.6px;width:1px;height:6px;background:#b0b0ae;"></div>
<div class="a" style="left:798px;top:315.4px;width:8.4px;height:8.4px;background:#fff;"></div>
<svg style="left:815px;top:311px" width="13" height="14" viewBox="815 311 13 14">
<rect x="815.8" y="312" width="13" height="12" fill="none" stroke="#fff" stroke-width="1.2"/>
<path d="M816 315.6h13M816 319.6h13" stroke="#fff" stroke-width="1.6"/>
</svg>
<!-- INSPECTOR BODY -->
<div class="a" style="left:3px;top:332.6px;width:825px;height:26px;background:#cdcdcd;"></div>
<div class="a" style="left:3px;top:358.2px;width:825px;height:267.8px;background:#ebebeb;"></div>
<div class="a" style="left:3px;top:357px;width:825px;height:1.2px;background:#6e6e6e;"></div>
<div class="a" style="left:9.2px;top:336.2px;width:83.6px;height:22.6px;background:linear-gradient(#fbfbfb,#f3f3f3);border:1px solid #6e6e6e;border-bottom:none"></div>
<div class="a" style="left:95px;top:336.4px;width:76.4px;height:21.4px;background:linear-gradient(#ececec,#d8d8d8);border:1px solid #6e6e6e;border-bottom:none"></div>
<div class="a" style="left:173.6px;top:336.4px;width:148.2px;height:21.4px;background:linear-gradient(#ececec,#d8d8d8);border:1px solid #6e6e6e;border-bottom:none"></div>
<div class="a" style="left:323.4px;top:336.4px;width:66.2px;height:21.4px;background:linear-gradient(#ececec,#d8d8d8);border:1px solid #6e6e6e;border-bottom:none"></div>
<span class="t" style="left:21.5px;top:339.2px;font-size:14px;font-weight:bold;color:#111;transform:scaleX(0.949);">General</span>
<span class="t" style="left:106px;top:339.2px;font-size:14px;font-weight:bold;color:#5c5c5c;transform:scaleX(0.969);">IO tags</span>
<span class="t" style="left:185px;top:339.2px;font-size:14px;font-weight:bold;color:#5c5c5c;transform:scaleX(0.943);">System constants</span>
<span class="t" style="left:335.5px;top:339.2px;font-size:14px;font-weight:bold;color:#5c5c5c;transform:scaleX(0.937);">Texts</span>
<div class="a" style="left:3px;top:358.6px;width:198.6px;height:267.4px;background:#f3f3f3;"></div>
<div class="a" style="left:3px;top:379.2px;width:198.6px;height:1px;background:#fafafa;"></div>
<div class="a" style="left:3px;top:398.2px;width:198.6px;height:1px;background:#fafafa;"></div>
<div class="a" style="left:3px;top:417.2px;width:198.6px;height:1px;background:#fafafa;"></div>
<div class="a" style="left:3px;top:436.2px;width:198.6px;height:1px;background:#fafafa;"></div>
<div class="a" style="left:3px;top:455.2px;width:198.6px;height:1px;background:#fafafa;"></div>
<div class="a" style="left:3px;top:474.2px;width:198.6px;height:1px;background:#fafafa;"></div>
<div class="a" style="left:3px;top:493.2px;width:198.6px;height:1px;background:#fafafa;"></div>
<div class="a" style="left:3px;top:512.2px;width:198.6px;height:1px;background:#fafafa;"></div>
<div class="a" style="left:3px;top:531.2px;width:198.6px;height:1px;background:#fafafa;"></div>
<div class="a" style="left:3px;top:550.2px;width:198.6px;height:1px;background:#fafafa;"></div>
<div class="a" style="left:3px;top:569.2px;width:198.6px;height:1px;background:#fafafa;"></div>
<div class="a" style="left:3px;top:588.2px;width:198.6px;height:1px;background:#fafafa;"></div>
<div class="a" style="left:3px;top:607.2px;width:198.6px;height:1px;background:#fafafa;"></div>
<div class="a" style="left:10px;top:366px;width:0;height:0;border-left:4.4px solid #111;border-top:4px solid transparent;border-bottom:4px solid transparent"></div>
<span class="t" style="left:22.3px;top:364px;font-size:12px;color:#111;transform:scaleX(0.993);">General</span>
<div class="a" style="left:8px;top:387px;width:0;height:0;border-top:4.6px solid #111;border-left:4.2px solid transparent;border-right:4.2px solid transparent"></div>
<span class="t" style="left:22.3px;top:383px;font-size:12px;color:#111;transform:scaleX(0.932);">PROFINET interface [X1]</span>
<span class="t" style="left:38.5px;top:402px;font-size:12px;color:#111;transform:scaleX(0.986);">General</span>
<div class="a" style="left:36.3px;top:418.4px;width:109.6px;height:17.6px;background:#2f62c9;border:1px dotted #d8e2f8"></div>
<span class="t" style="left:38.5px;top:421px;font-size:12px;color:#fff;transform:scaleX(1.014);">Ethernet addresses</span>
<div class="a" style="left:24px;top:444px;width:0;height:0;border-top:4.6px solid #111;border-left:4.2px solid transparent;border-right:4.2px solid transparent"></div>
<span class="t" style="left:38.5px;top:440px;font-size:12px;color:#111;transform:scaleX(1.011);">Advanced options</span>
<span class="t" style="left:54.5px;top:459px;font-size:12px;color:#111;transform:scaleX(1.020);">Interface options</span>
<span class="t" style="left:54.5px;top:478px;font-size:12px;color:#111;transform:scaleX(1.015);">Media redundancy</span>
<div class="a" style="left:42.5px;top:499px;width:0;height:0;border-left:4.4px solid #111;border-top:4px solid transparent;border-bottom:4px solid transparent"></div>
<span class="t" style="left:54px;top:497px;font-size:12px;color:#111;transform:scaleX(1.017);">Real time settings</span>
<div class="a" style="left:42.5px;top:518px;width:0;height:0;border-left:4.4px solid #111;border-top:4px solid transparent;border-bottom:4px solid transparent"></div>
<span class="t" style="left:54px;top:516px;font-size:12px;color:#111;transform:scaleX(0.926);">Port [X1 P1 R]</span>
<div class="a" style="left:42.5px;top:537px;width:0;height:0;border-left:4.4px solid #111;border-top:4px solid transparent;border-bottom:4px solid transparent"></div>
<span class="t" style="left:54px;top:535px;font-size:12px;color:#111;transform:scaleX(0.926);">Port [X1 P2 R]</span>
<span class="t" style="left:38px;top:554px;font-size:12px;color:#111;transform:scaleX(1.019);">Diagnostics addresses</span>
<span class="t" style="left:22px;top:573px;font-size:12px;color:#111;transform:scaleX(1.025);">Module parameters</span>
<span class="t" style="left:22px;top:592px;font-size:12px;color:#111;transform:scaleX(1.019);">Diagnostics addresses</span>
<div class="a" style="left:200.8px;top:360px;width:8.2px;height:267px;background:linear-gradient(90deg,#c6c6c6,#e2e2e2 60%,#fbfbfb);border:1.1px solid #8e8e8e;border-bottom:none"></div>
<div class="a" style="left:200.8px;top:464.4px;width:8.2px;height:21.6px;background:#f4f4f4;border:1px solid #9a9a9a"></div>
<div class="a" style="left:200.8px;top:498.8px;width:8.2px;height:21.8px;background:#f4f4f4;border:1px solid #9a9a9a"></div>
<div class="a" style="left:203.2px;top:472.6px;width:0;height:0;border-right:3.4px solid #111;border-top:3px solid transparent;border-bottom:3px solid transparent"></div>
<div class="a" style="left:203.8px;top:506.6px;width:0;height:0;border-left:3.4px solid #111;border-top:3px solid transparent;border-bottom:3px solid transparent"></div>
<div class="a" style="left:221.2px;top:359.6px;width:607px;height:78px;background:#cecece;"></div>
<div class="a" style="left:221.2px;top:444px;width:607px;height:143.5px;background:#cecece;"></div>
<span class="t" style="left:339.9px;top:363.55px;font-size:12.5px;color:#8d8d8d;transform:scaleX(0.983);">Subnet mask:</span>
<span class="t" style="left:330px;top:411.55px;font-size:12.5px;color:#8d8d8d;transform:scaleX(0.956);">Router address:</span>
<div class="inp" style="left:425px;top:360.4px;width:139.8px;height:17.2px;background:#d4d4d4;border-color:#8f8f8f"></div>
<div class="inp" style="left:425px;top:408.2px;width:139.8px;height:17.2px;background:#d4d4d4;border-color:#8f8f8f"></div>
<span class="t" style="left:433px;top:363.95px;font-size:12.5px;color:#8d8d8d;transform:scaleX(1.007);">255</span>
<span class="t" style="left:460.4px;top:363.95px;font-size:12.5px;color:#8d8d8d;transform:scaleX(0.631);">.</span>
<span class="t" style="left:469.5px;top:363.95px;font-size:12.5px;color:#8d8d8d;transform:scaleX(0.983);">255</span>
<span class="t" style="left:496.8px;top:363.95px;font-size:12.5px;color:#8d8d8d;transform:scaleX(0.631);">.</span>
<span class="t" style="left:505.8px;top:363.95px;font-size:12.5px;color:#8d8d8d;transform:scaleX(0.968);">255</span>
<span class="t" style="left:533px;top:363.95px;font-size:12.5px;color:#8d8d8d;transform:scaleX(0.631);">.</span>
<span class="t" style="left:542px;top:363.95px;font-size:12.5px;color:#8d8d8d;transform:scaleX(0.920);">0</span>
<span class="t" style="left:433px;top:411.95px;font-size:12.5px;color:#8d8d8d;transform:scaleX(0.920);">0</span>
<span class="t" style="left:460.4px;top:411.95px;font-size:12.5px;color:#8d8d8d;transform:scaleX(0.631);">.</span>
<span class="t" style="left:469.5px;top:411.95px;font-size:12.5px;color:#8d8d8d;transform:scaleX(0.920);">0</span>
<span class="t" style="left:496.8px;top:411.95px;font-size:12.5px;color:#8d8d8d;transform:scaleX(0.631);">.</span>
<span class="t" style="left:505.8px;top:411.95px;font-size:12.5px;color:#8d8d8d;transform:scaleX(0.920);">0</span>
<span class="t" style="left:533px;top:411.95px;font-size:12.5px;color:#8d8d8d;transform:scaleX(0.631);">.</span>
<span class="t" style="left:542px;top:411.95px;font-size:12.5px;color:#8d8d8d;transform:scaleX(0.920);">0</span>
<div class="a" style="left:426px;top:384.8px;width:13.2px;height:13.2px;background:linear-gradient(135deg,#f4f4f4,#dedede);border:1px solid #c0c0c0;border-radius:1.5px"></div>
<span class="t" style="left:444px;top:386.55px;font-size:12.5px;color:#8d8d8d;transform:scaleX(0.977);">Use router</span>
<span class="t" style="left:236px;top:450.3px;font-size:13.4px;font-weight:bold;color:#111;transform:scaleX(0.939);">PROFINET</span>
<svg style="left:425px;top:486px" width="15" height="15" viewBox="425 486 15 15">
<rect x="425.9" y="486.6" width="13.4" height="13.4" rx="2" fill="#2a6fb4" stroke="#1d4f8c" stroke-width="1"/>
<defs><linearGradient id="cbg" x1="0" y1="0" x2="1" y2="1"><stop offset="0" stop-color="#f4f9ff"/><stop offset=".55" stop-color="#b4d4f2"/><stop offset="1" stop-color="#4a94dc"/></linearGradient></defs><rect x="427.2" y="487.9" width="10.8" height="10.8" rx="1" fill="url(#cbg)"/>
<path d="M428.6 492.6l3 3.6l5-7" fill="none" stroke="#1a2c6a" stroke-width="2"/>
</svg>
<span class="t" style="left:444px;top:487.55px;font-size:12.5px;color:#111;transform:scaleX(0.950);">Generate PROFINET device name automatically</span>
<span class="t" style="left:291.3px;top:512.55px;font-size:12.5px;color:#111;transform:scaleX(0.892);">PROFINET device name</span>
<span class="t" style="left:321.4px;top:536.75px;font-size:12.5px;color:#111;transform:scaleX(0.982);">Converted name:</span>
<span class="t" style="left:329.3px;top:560.75px;font-size:12.5px;color:#111;transform:scaleX(0.986);">Device number:</span>
<div class="inp" style="left:425.2px;top:511.2px;width:390px;height:16.6px"></div>
<div class="inp" style="left:425.2px;top:535px;width:390px;height:16.6px"></div>
<div class="inp" style="left:425.2px;top:558.4px;width:390px;height:17.2px;background:#fff"></div>
<span class="t" style="left:429px;top:513.15px;font-size:12.5px;color:#111;transform:scaleX(0.988);">io device_1</span>
<span class="t" style="left:429px;top:537.15px;font-size:12.5px;color:#111;transform:scaleX(0.981);">ioxadevicexb1652a</span>
<span class="t" style="left:429px;top:560.95px;font-size:12.5px;color:#111;transform:scaleX(0.805);">1</span>
<div class="a" style="left:799px;top:559.4px;width:16px;height:15.2px;background:#fafafa"></div><div class="a" style="left:800px;top:560.4px;width:14px;height:13.2px;background:linear-gradient(#ececec,#dddddd);border:1px solid #9c9c9c"></div>
<div class="a" style="left:803.2px;top:565.4px;width:0;height:0;border-top:4px solid #111;border-left:3.8px solid transparent;border-right:3.8px solid transparent"></div>
<svg style="left:682px;top:574px" width="38" height="30" viewBox="682 574 38 30">
<g stroke="#9a9a9a" stroke-width="1" fill="#fdfdfd">
<path d="M695 577c-6 0-10.6 3.8-10.6 8.4c0 2.6 1.4 4.8 3.6 6.4l-1 3.2l3.8-1.9c1.3.4 2.7.6 4.2.600c6 0 10.6-3.8 10.6-8.300c0-4.6-4.6-8.4-10.6-8.400z"/>
<path d="M706 584.200c-5.4 0-9.8 3.5-9.8 7.800c0 4.3 4.4 7.8 9.8 7.800c1.2 0 2.4-.2 3.4-.5l3.4 1.700l-.9-2.900c2.4-1.4 3.9-3.6 3.9-6.100c0-4.3-4.4-7.8-9.8-7.800z"/>
</g>
<g fill="#b5b5b5"><circle cx="691.4" cy="582.6" r="1.1"/><circle cx="698.4" cy="582.6" r="1.1"/><circle cx="702.8" cy="589.4" r="1"/><circle cx="709.2" cy="589.4" r="1"/></g>
</svg>
<span class="a" style="left:722.5px;top:579.4px;font-size:19.8px;line-height:1;white-space:nowrap;font-weight:bold;color:#fdfdfd;text-shadow:1px 1px 0 #6e6e6e,0 0 1.5px #777;transform:skewX(-7deg)">方正智芯</span>
</body>
</html>
